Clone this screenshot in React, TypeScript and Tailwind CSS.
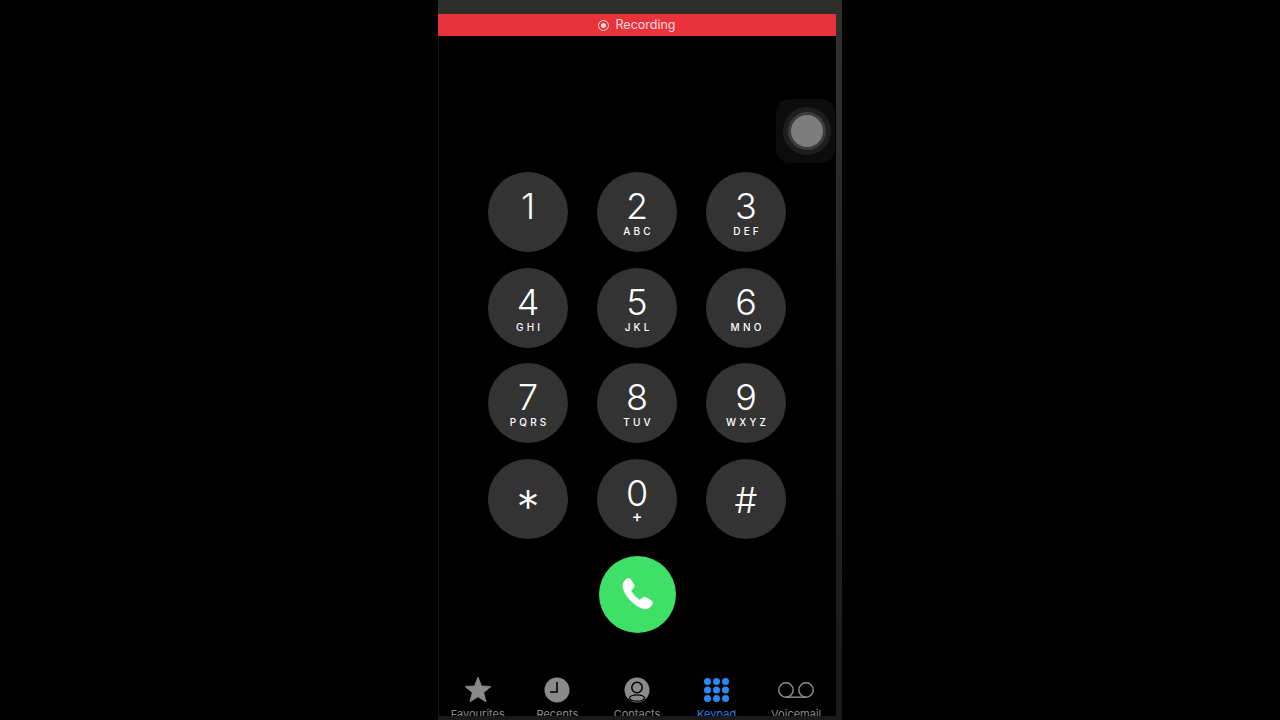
const keys = [
  { digit: '1', letters: '' },
  { digit: '2', letters: 'ABC' },
  { digit: '3', letters: 'DEF' },
  { digit: '4', letters: 'GHI' },
  { digit: '5', letters: 'JKL' },
  { digit: '6', letters: 'MNO' },
  { digit: '7', letters: 'PQRS' },
  { digit: '8', letters: 'TUV' },
  { digit: '9', letters: 'WXYZ' },
  { digit: '*', letters: '' },
  { digit: '0', letters: '+' },
  { digit: '#', letters: '' },
];

function StarIcon() {
  return (
    <svg width="28" height="27" viewBox="0 0 28 27" fill="#8a8a8a" stroke="#8a8a8a" strokeWidth="0.8" strokeLinejoin="round">
      <path d="M14 1l3.500 8.900 9.500.6-7.300 6.100 2.400 9.300L14 20.800l-8.100 5.100 2.400-9.300L1 10.500l9.500-.6z" />
    </svg>
  );
}

function ClockIcon() {
  return (
    <svg width="26" height="26" viewBox="0 0 26 26">
      <circle cx="13" cy="13" r="12.5" fill="#8a8a8a" />
      <path d="M13 5v10H6" fill="none" stroke="#000" strokeWidth="1.6" />
    </svg>
  );
}

function ContactIcon() {
  return (
    <svg width="26" height="26" viewBox="0 0 26 26">
      <circle cx="13" cy="13" r="12.5" fill="#8a8a8a" />
      <circle cx="13" cy="10.500" r="5.200" fill="#8a8a8a" stroke="#000" strokeWidth="1.500" />
      <ellipse cx="13" cy="21" rx="7.500" ry="3.200" fill="#8a8a8a" stroke="#000" strokeWidth="1.300" />
    </svg>
  );
}

function KeypadIcon() {
  return (
    <svg width="25" height="24" viewBox="0 0 25 24" fill="#2a8af5">
      {[3.500, 12.500, 21.500].map((cx) =>
        [3.500, 12, 20.500].map((cy) => <circle key={`${cx}-${cy}`} cx={cx} cy={cy} r="3.500" />)
      )}
    </svg>
  );
}

function VoicemailIcon() {
  return (
    <svg width="36" height="16" viewBox="0 0 36 16" fill="none" stroke="#8a8a8a" strokeWidth="1.500">
      <circle cx="8" cy="8" r="7.200" />
      <circle cx="28" cy="8" r="7.200" />
      <path d="M8 15.200h20" />
    </svg>
  );
}

function PhoneIcon() {
  return (
    <svg width="32" height="33" viewBox="0 0 32 33" fill="#fff">
      <path d="M5 .6C6.600-.2 8.100.2 9 1.600l3 5c.8 1.300.6 2.700-.5 3.700l-1.500 1.400c-.6.600-.7 1.200-.3 1.900 1.500 2.700 4.300 5.800 7.300 7.700.7.400 1.300.3 1.900-.2l1.700-1.500c1.100-1 2.400-1.100 3.700-.3l5 3.100c1.500.9 1.900 2.400 1.100 3.900-1.300 2.500-4 5.400-7.300 4.900C13 29.700 1.200 16.500.6 8.400.3 5.400 2.400 2 5 .6z" />
    </svg>
  );
}

function Tab({ label, active, children }: { label: string; active?: boolean; children: React.ReactNode }) {
  return (
    <div className="flex flex-col items-center w-[80px]">
      <div className="h-[26px] flex items-center justify-center">{children}</div>
      <span className={`mt-[4px] text-[11px] leading-[14px] whitespace-nowrap ${active ? 'text-[#2a7fe0]' : 'text-[#8a8a8a]'}`}>
        {label}
      </span>
    </div>
  );
}

export default function App() {
  return (
    <div className="h-[720px] w-[1280px] bg-black flex justify-center overflow-hidden font-['Inter',sans-serif]">
      <div className="relative w-[404px] h-[720px] flex flex-col overflow-hidden">
        {/* Status strip */}
        <div className="h-[14px] bg-[#2e2e2b] shrink-0"></div>

        {/* Recording bar */}
        <div className="w-[398px] h-[22px] bg-[#e8323c] flex items-center justify-center gap-[6px] shrink-0">
          <span className="w-[11px] h-[11px] rounded-full border border-[#fbdcdc] flex items-center justify-center">
            <span className="w-[5px] h-[5px] rounded-full bg-[#fbdcdc]"></span>
          </span>
          <span className="text-[12.500px] leading-none text-[#fbdcdc]">Recording</span>
        </div>

        {/* Keypad */}
        <div className="mt-[136px] ml-[50px] w-[298px] grid grid-cols-3 gap-x-[29px] gap-y-[15.500px] shrink-0">
          {keys.map((key) => (
            <div key={key.digit} className="w-[80px] h-[80px] rounded-full bg-[#333333] text-white flex flex-col items-center pt-[15px]">
              {key.digit === '*' && <span className="mt-[10px] text-[46px] leading-[46px] font-light">*</span>}
              {key.digit === '#' && <span className="mt-[5px] text-[36px] leading-[42px] font-light">#</span>}
              {key.digit !== '*' && key.digit !== '#' && (
                <span className="text-[36px] leading-[39px] font-light">{key.digit}</span>
              )}
              {key.letters && (
                <span className={key.letters === '+' ? 'text-[16px] leading-[6px] font-medium' : 'text-[10px] leading-[11px] font-medium tracking-[3.200px] mr-[-3.200px]'}>
                  {key.letters}
                </span>
              )}
            </div>
          ))}
        </div>

        {/* Call button */}
        <div className="mt-[17px] ml-[161px] w-[77px] h-[77px] rounded-full bg-[#3ee068] flex items-center justify-center shrink-0">
          <PhoneIcon />
        </div>

        {/* Tab bar */}
        <div className="mt-[44px] flex justify-between w-[398px] shrink-0">
          <Tab label="Favourites">
            <StarIcon />
          </Tab>
          <Tab label="Recents">
            <ClockIcon />
          </Tab>
          <Tab label="Contacts">
            <ContactIcon />
          </Tab>
          <Tab label="Keypad" active>
            <KeypadIcon />
          </Tab>
          <Tab label="Voicemail">
            <VoicemailIcon />
          </Tab>
        </div>

        {/* Assistive touch button */}
        <div className="absolute right-[7px] top-[99px] w-[59px] h-[64px] rounded-[14px] bg-[#0c0c0c] flex items-center justify-center">
          <div className="ml-[3px] w-[48px] h-[48px] rounded-full bg-[#1e1e1e] flex items-center justify-center">
            <div className="w-[32px] h-[32px] rounded-full bg-[#7d7d7d] ring-[3px] ring-[#3c3c3c]"></div>
          </div>
        </div>

        {/* Screen edges */}
        <div className="absolute left-0 top-[36px] bottom-0 w-px bg-[#141414]"></div>
        <div className="absolute right-0 top-[14px] bottom-0 w-[6px] bg-linear-to-b from-[#30302d] to-[#1a1a1a]"></div>
        <div className="absolute left-0 right-0 bottom-0 h-[4px] bg-[#1a1a1a]"></div>
      </div>
    </div>
  );
}
